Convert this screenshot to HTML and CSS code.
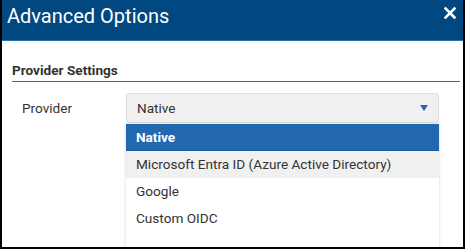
FILE: index.html
```html
<!DOCTYPE html>
<html lang="en">
<head>
    <meta charset="UTF-8">
    <meta name="viewport" content="width=device-width, initial-scale=1.0">
    <title>Advanced Options</title>
    <link rel="stylesheet" href="styles.css">
</head>
<body>
    <div class="dialog">
        <div class="dialog-header">
            <h1>Advanced Options</h1>
            <button class="close" aria-label="Close">
                <svg width="12" height="12" viewBox="0 0 12 12">
                    <path d="M1.5 1.5 L10.5 10.5 M10.5 1.5 L1.5 10.5" stroke="#fff" stroke-width="2.6" stroke-linecap="square"/>
                </svg>
            </button>
        </div>
        <div class="dialog-body">
            <h2 class="section-title">Provider Settings</h2>
            <div class="form-row">
                <label for="provider">Provider</label>
                <div class="select-wrap">
                    <div class="select" id="provider">
                        <span>Native</span>
                        <span class="caret"></span>
                    </div>
                    <ul class="dropdown">
                        <li class="selected">Native</li>
                        <li class="hover">Microsoft Entra ID (Azure Active Directory)</li>
                        <li>Google</li>
                        <li>Custom OIDC</li>
                    </ul>
                </div>
            </div>
        </div>
    </div>
</body>
</html>
```

FILE: styles.css
```css
html, body {
    margin: 0;
    height: 100%;
}
body {
    font-family: Roboto, "Liberation Sans", Arial, sans-serif;
    color: #333;
    background: #fff;
}
.dialog {
    box-sizing: border-box;
    height: 249px;
    border: 2px solid #000;
    border-top: none;
    overflow: hidden;
}
.dialog-header {
    display: flex;
    align-items: flex-start;
    justify-content: space-between;
    height: 40px;
    background-color: #00487f;
    border-bottom: 1px solid #2a6cb0;
    margin: 0 -2px;
    padding: 0 0 0 7px;
}
.dialog-header h1 {
    margin: 0;
    font-size: 20px;
    font-weight: 400;
    line-height: 20px;
    padding-top: 6px;
    color: #fff;
}
.close {
    background: none;
    border: none;
    padding: 0;
    margin: 7px 9px 0 0;
    cursor: pointer;
    line-height: 0;
}
.dialog-body {
    padding: 21px 3px 0 10px;
}
.section-title {
    margin: 0;
    font-size: 13.6px;
    font-weight: 700;
    line-height: 16px;
    padding-bottom: 3px;
    border-bottom: 1px solid #2a6cb0;
}
.form-row {
    display: flex;
    align-items: center;
    margin-top: 11px;
}
.form-row label {
    box-sizing: border-box;
    width: 114px;
    padding-left: 10px;
    font-size: 13.6px;
}
.select-wrap {
    position: relative;
    width: 313px;
}
.select {
    box-sizing: border-box;
    display: flex;
    align-items: center;
    justify-content: space-between;
    height: 30px;
    padding: 0 10px 0 10px;
    background: #f0f0f0;
    border: 1px solid #ddd;
    border-radius: 3px;
    font-size: 13.6px;
}
.caret {
    width: 0;
    height: 0;
    border-left: 4px solid transparent;
    border-right: 4px solid transparent;
    border-top: 6px solid #2168b0;
}
.dropdown {
    position: absolute;
    top: 31px;
    left: 0;
    right: 0;
    height: 140px;
    margin: 0;
    padding: 0;
    list-style: none;
    background: #fff;
    box-shadow: 0 0 3px rgba(0, 0, 0, 0.18);
    font-size: 13.6px;
}
.dropdown li {
    height: 27px;
    line-height: 27px;
    padding-left: 10px;
}
.dropdown li.selected {
    background: #2168b0;
    color: #fff;
    font-weight: 700;
    box-shadow: inset 0 -1px 0 #1b5a9a;
}
.dropdown li.hover {
    background: #f0f0f0;
}
```
